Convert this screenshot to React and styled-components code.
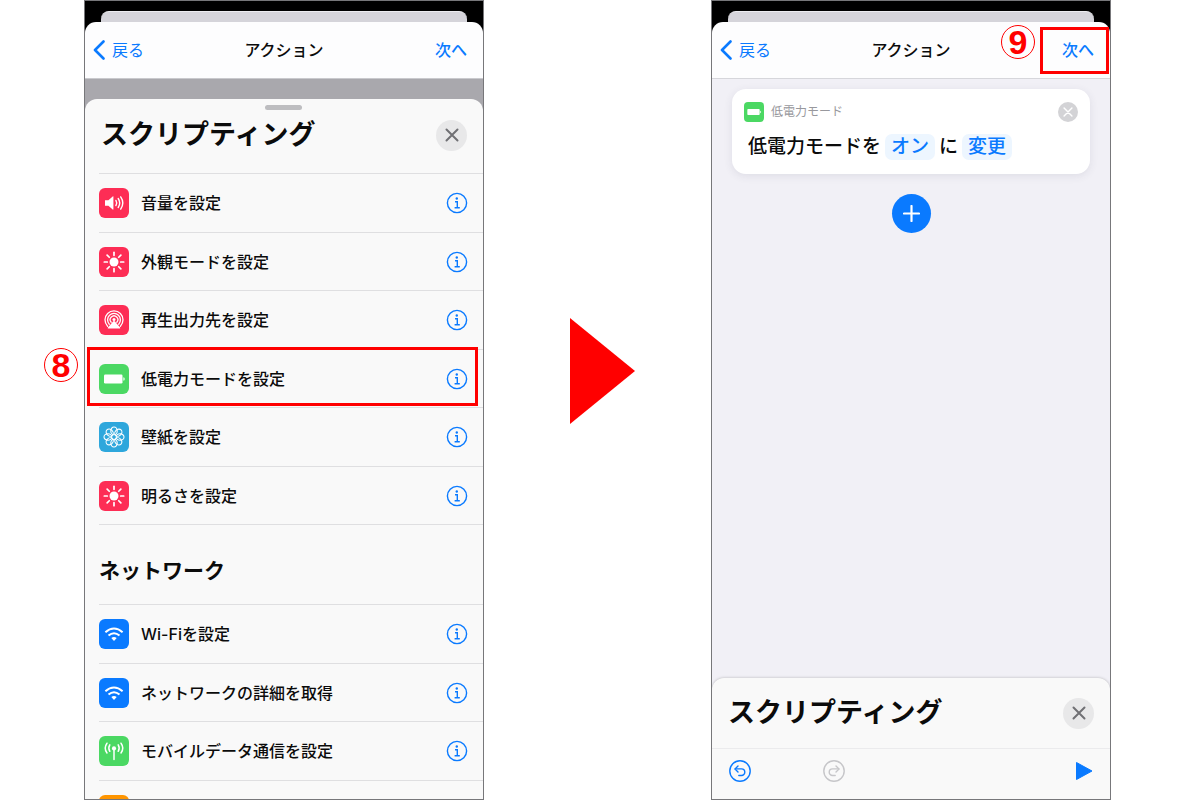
import React from "react";
import styled, { createGlobalStyle } from "styled-components";

const BLUE = "#0a7aff";
const RED = "#ff0000";

const GlobalStyle = createGlobalStyle`
  *, *::before, *::after { box-sizing: border-box; }
  body {
    margin: 0;
    background: #fff;
    color: #0b0b0b;
    font-family: Inter, "Noto Sans CJK JP", sans-serif;
    font-size: 16px;
    line-height: 24px;
  }
  h1, h2, h3, p, ul { margin: 0; padding: 0; }
  ul { list-style: none; }
  button {
    margin: 0;
    padding: 0;
    border: 0;
    background: none;
    color: inherit;
    font: inherit;
    cursor: pointer;
  }
  svg { display: block; flex: none; }
`;

const Page = styled.main`
  display: grid;
  grid-template-columns: 84fr 400fr 227fr 400fr 89fr;
  height: 100vh;
  overflow: hidden;
`;

const Slot = styled.section`
  position: relative;
  grid-column: ${(p) => p.$column};
  min-width: 0;
  height: 100vh;
`;

const Phone = styled.div`
  display: flex;
  flex-direction: column;
  height: 100%;
  overflow: hidden;
  border: 1px solid #77777a;
  background: ${(p) => p.$background};
`;

const Top = styled.div`
  flex: none;
  padding-top: 10px;
  background: #000;
`;

const Peek = styled.div`
  height: 11px;
  margin: 0 16px;
  border-top: 1px solid #ececf0;
  border-radius: 8px 8px 0 0;
  background: #d5d4da;
`;

const NavBar = styled.header`
  display: grid;
  grid-template-columns: 1fr auto 1fr;
  align-items: center;
  height: 57px;
  padding: 0 8px;
  border-bottom: 1px solid ${(p) => p.$line};
  border-radius: 11px 11px 0 0;
  background: #fdfdfe;
`;

const NavTitle = styled.h1`
  font-size: 16px;
  line-height: 24px;
  font-weight: 500;
`;

const BackButton = styled.button`
  display: flex;
  align-items: center;
  gap: 7px;
  justify-self: start;
  color: ${BLUE};
`;

const NextButton = styled.button`
  justify-self: end;
  padding: 0 8px;
  color: ${BLUE};
  font-weight: 500;
`;

const DimBand = styled.div`
  flex: none;
  height: 32px;
  margin-bottom: -12px;
  background: #a9a8ad;
`;

const Sheet = styled.div`
  position: relative;
  flex: none;
  border-radius: 12px 12px 0 0;
  background: #f9f9f9;
  box-shadow: ${(p) => (p.$raised ? "0 0 3px rgba(0, 0, 0, 0.25)" : "none")};
`;

const Grabber = styled.span`
  position: absolute;
  top: 6px;
  left: 50%;
  width: 37px;
  height: 5px;
  margin-left: -19px;
  border-radius: 3px;
  background: #bdbdc0;
`;

const SheetHeader = styled.div`
  display: flex;
  align-items: center;
  justify-content: space-between;
  height: ${(p) => p.$height}px;
  padding: 0 16px;
`;

const SheetTitle = styled.h2`
  font-size: 27px;
  line-height: 36px;
  font-weight: 700;
`;

const CloseButton = styled.button`
  display: grid;
  place-items: center;
  width: ${(p) => p.$size}px;
  height: ${(p) => p.$size}px;
  border-radius: 50%;
  background: ${(p) => p.$fill};
`;

const ActionList = styled.ul`
  display: grid;
  grid-auto-rows: 1fr;
  height: ${(p) => p.$height}px;
  margin-left: 14px;
  border-bottom: 1px solid #dfdfe1;
`;

const ActionRow = styled.li`
  display: flex;
  align-items: center;
  gap: 12px;
  min-width: 0;
  padding-top: 1px;
  padding-right: 15px;
  border-top: 1px solid #dfdfe1;
  font-weight: 500;
`;

const ActionName = styled.span`
  flex: 1;
  white-space: nowrap;
`;

const GroupTitle = styled.h3`
  height: 79px;
  padding: 30px 14px 0;
  font-size: 21px;
  line-height: 32px;
  font-weight: 700;
`;

const Workspace = styled.div`
  display: flex;
  flex: 1;
  flex-direction: column;
  align-items: center;
  gap: 20px;
  min-height: 0;
  padding: 10px 20px;
`;

const Card = styled.article`
  width: 100%;
  height: 85px;
  padding: 12px;
  border-radius: 14px;
  background: #fff;
  box-shadow: 0 2px 8px rgba(60, 60, 90, 0.1);
`;

const CardHeader = styled.div`
  display: flex;
  align-items: center;
  gap: 7px;
  height: 21px;
  color: #98989d;
  font-size: 12px;
  line-height: 20px;
`;

const CardLabel = styled.span`
  flex: 1;
`;

const Sentence = styled.p`
  display: flex;
  align-items: center;
  gap: 4px;
  padding: 12px 4px;
  font-size: 19px;
  line-height: 26px;
  font-weight: 500;
`;

const Token = styled.button`
  padding: 0 6px;
  border-radius: 7px;
  background: #edf6ff;
  color: ${BLUE};
`;

const AddButton = styled.button`
  display: grid;
  place-items: center;
  width: 39px;
  height: 39px;
  border-radius: 50%;
  background: ${BLUE};
`;

const Toolbar = styled.div`
  display: flex;
  align-items: flex-start;
  gap: 72px;
  height: 51px;
  padding: 11px 17px;
  border-top: 1px solid #ebebed;
`;

const PlayButton = styled.button`
  margin-left: auto;
`;

const Gutter = styled.div`
  display: flex;
  align-items: flex-start;
  justify-content: center;
  padding: 318px 0 0 10px;
`;

const StepNumber = styled.span`
  position: absolute;
  display: grid;
  place-items: center;
  width: 34px;
  height: 34px;
  border: 1px solid ${RED};
  border-radius: 50%;
  color: ${RED};
  font: 700 34px/32px "Liberation Sans", sans-serif;
`;

const StepEight = styled(StepNumber)`
  top: 348px;
  left: -40px;
`;

const StepNine = styled(StepNumber)`
  top: 25px;
  right: 76px;
`;

const Highlight = styled.span`
  position: absolute;
  border: 3px solid ${RED};
  pointer-events: none;
`;

const RowHighlight = styled(Highlight)`
  top: 347px;
  right: 6px;
  left: 3px;
  height: 59px;
`;

const NextHighlight = styled(Highlight)`
  top: 27px;
  right: 2px;
  width: 69px;
  height: 47px;
`;

const rays = [0, 45, 90, 135, 180, 225, 270, 315];

const glyphs = {
  volume: {
    color: "#fd2d55",
    art: (
      <>
        <path d="M6 12.3h3.4l4.3-3.8c.4-.3.7-.2.7.3v12.4c0 .5-.3.6-.7.3l-4.3-3.8H6z" fill="#fff" />
        <g fill="none" stroke="#fff" strokeWidth="1.4" strokeLinecap="round">
          <path d="M16.9 12.4q1.6 2.6 0 5.2" />
          <path d="M19.2 10.5q3 4.5 0 9" />
          <path d="M21.7 8.9q4.2 6.1 0 12.2" />
        </g>
      </>
    ),
  },
  sun: {
    color: "#fd2d55",
    art: (
      <>
        <circle cx="15" cy="15" r="4.5" fill="#fff" />
        <g stroke="#fff" strokeWidth="1.7" strokeLinecap="round">
          {rays.map((a) => (
            <path key={a} d="M15 5.3v3" transform={`rotate(${a} 15 15)`} />
          ))}
        </g>
      </>
    ),
  },
  airplay: {
    color: "#fd2d55",
    art: (
      <>
        <g fill="none" stroke="#fff" strokeWidth="1.3" strokeLinecap="round">
          <path d="M8.6 21.2a9 9 0 1 1 12.8 0" />
          <path d="M10.3 19.2a6.4 6.4 0 1 1 9.4 0" />
          <path d="M12.2 17.3a3.8 3.8 0 1 1 5.600 0" />
        </g>
        <circle cx="15" cy="14.6" r="1.5" fill="#fff" />
        <path d="M14.3 16.3q.7-.8 1.4 0l5.400 6.300q.5.9-.5 1H9.400q-1-.1-.5-1z" fill="#fff" />
      </>
    ),
  },
  battery: {
    color: "#4bd863",
    art: (
      <>
        <rect x="5" y="10.5" width="18.5" height="9" rx="1.2" fill="#fff" />
        <path d="M24.4 13.2q1.3.3 1.3 1.8t-1.3 1.8z" fill="#fff" />
      </>
    ),
  },
  flower: {
    color: "#2ea7dc",
    art: (
      <g fill="none" stroke="#fff" strokeWidth="1.1">
        {rays.map((a) => (
          <ellipse key={a} cx="15" cy="8.9" rx="3.2" ry="3.9" transform={`rotate(${a} 15 15)`} />
        ))}
      </g>
    ),
  },
  wifi: {
    color: "#0a7aff",
    art: (
      <>
        <g fill="none" stroke="#fff" strokeWidth="2">
          <path d="M6.4 13.2q8.6-7.4 17.2 0" />
          <path d="M9.5 16.5q5.5-4.6 11 0" />
        </g>
        <path d="M12.3 19q2.7-2 5.4 0L15 21.9z" fill="#fff" />
      </>
    ),
  },
  antenna: {
    color: "#4bd863",
    art: (
      <>
        <circle cx="15" cy="12.4" r="2.1" fill="#fff" />
        <g fill="none" stroke="#fff" strokeWidth="1.5" strokeLinecap="round">
          <path d="M15 13v10.5" />
          <path d="M10.8 8.9q-2 3.2 0 6.4M19.2 8.9q2 3.2 0 6.4" />
          <path d="M8 7.200q-3.600 4.900 0 9.800M22 7.200q3.600 4.900 0 9.800" />
        </g>
      </>
    ),
  },
  plain: { color: "#ff9500", art: null },
};

function AppIcon({ name, size = 30 }) {
  const glyph = glyphs[name];
  return (
    <svg width={size} height={size} viewBox="0 0 30 30" aria-hidden="true">
      <rect width="30" height="30" rx="6" fill={glyph.color} />
      {glyph.art}
    </svg>
  );
}

function InfoIcon() {
  return (
    <svg width="22" height="22" viewBox="0 0 22 22" fill="none" stroke={BLUE} aria-hidden="true">
      <circle cx="11" cy="11" r="9.6" strokeWidth="1.4" />
      <circle cx="10.8" cy="6.5" r="1.2" fill={BLUE} stroke="none" />
      <path d="M9 9.7h2.3v6M8.6 15.8h5.2" strokeWidth="1.4" />
    </svg>
  );
}

function CrossIcon({ size, color, width }) {
  return (
    <svg width={size} height={size} viewBox="0 0 14 14" aria-hidden="true">
      <path d="M1.5 1.5l11 11M12.5 1.5l-11 11" stroke={color} strokeWidth={width} strokeLinecap="round" />
    </svg>
  );
}

function HistoryIcon({ color, redo }) {
  return (
    <svg width="22" height="22" viewBox="0 0 22 22" fill="none" stroke={color} aria-hidden="true">
      <circle cx="11" cy="11" r="10.2" strokeWidth="1.4" />
      <g
        transform={redo ? "translate(22 0) scale(-1 1)" : undefined}
        strokeWidth="1.4"
        strokeLinecap="round"
        strokeLinejoin="round"
      >
        <path d="M9 5.9L6 8.9l3 3" />
        <path d="M6.200 8.900h6.300a3.300 3.300 0 0 1 0 6.600h-2.700" />
      </g>
    </svg>
  );
}

function Nav({ line }) {
  return (
    <Top>
      <Peek />
      <NavBar $line={line}>
        <BackButton>
          <svg width="12" height="20" viewBox="0 0 12 20" fill="none" aria-hidden="true">
            <path d="M10.5 1.5L2 10l8.5 8.5" stroke={BLUE} strokeWidth="2.6" strokeLinecap="round" strokeLinejoin="round" />
          </svg>
          戻る
        </BackButton>
        <NavTitle>アクション</NavTitle>
        <NextButton>次へ</NextButton>
      </NavBar>
    </Top>
  );
}

const HeaderSpace = styled.div`
  padding: 3px 0 5px;
`;

function SheetTop({ height }) {
  return (
    <SheetHeader $height={height}>
      <SheetTitle>スクリプティング</SheetTitle>
      <CloseButton $size={31} $fill="#e8e8e9" aria-label="閉じる">
        <CrossIcon size={14} color="#707074" width={2} />
      </CloseButton>
    </SheetHeader>
  );
}

function Actions({ items, height }) {
  return (
    <ActionList $height={height}>
      {items.map(([icon, name]) => (
        <ActionRow key={icon + name}>
          <AppIcon name={icon} />
          <ActionName>{name}</ActionName>
          <button aria-label="情報">
            <InfoIcon />
          </button>
        </ActionRow>
      ))}
    </ActionList>
  );
}

const scriptingActions = [
  ["volume", "音量を設定"],
  ["sun", "外観モードを設定"],
  ["airplay", "再生出力先を設定"],
  ["battery", "低電力モードを設定"],
  ["flower", "壁紙を設定"],
  ["sun", "明るさを設定"],
];

const networkActions = [
  ["wifi", "Wi-Fiを設定"],
  ["wifi", "ネットワークの詳細を取得"],
  ["antenna", "モバイルデータ通信を設定"],
  ["plain", ""],
];

export default function App() {
  return (
    <>
      <GlobalStyle />
      <Page>
        <Slot $column={2}>
          <Phone $background="#f9f9f9">
            <Nav line="#c9c9cd" />
            <DimBand />
            <Sheet>
              <Grabber />
              <HeaderSpace>
                <SheetTop height={66} />
              </HeaderSpace>
              <Actions items={scriptingActions} height={352} />
              <GroupTitle>ネットワーク</GroupTitle>
              <Actions items={networkActions} height={235} />
            </Sheet>
          </Phone>
          <RowHighlight />
          <StepEight>8</StepEight>
        </Slot>
        <Gutter>
          <svg width="65" height="106" viewBox="0 0 65 106" aria-hidden="true">
            <path d="M0 0L65 53L0 106z" fill={RED} />
          </svg>
        </Gutter>
        <Slot $column={4}>
          <Phone $background="#f1f0f6">
            <Nav line="#d6d6db" />
            <Workspace>
              <Card>
                <CardHeader>
                  <AppIcon name="battery" size={20} />
                  <CardLabel>低電力モード</CardLabel>
                  <CloseButton $size={20} $fill="#d3d3d6" aria-label="削除">
                    <CrossIcon size={10} color="#fff" width={2} />
                  </CloseButton>
                </CardHeader>
                <Sentence>
                  低電力モードを
                  <Token>オン</Token>
                  に
                  <Token>変更</Token>
                </Sentence>
              </Card>
              <AddButton aria-label="追加">
                <svg width="17" height="17" viewBox="0 0 17 17" aria-hidden="true">
                  <path d="M8.5 1v15M1 8.5h15" stroke="#fff" strokeWidth="2.200" strokeLinecap="round" />
                </svg>
              </AddButton>
            </Workspace>
            <Sheet $raised>
              <SheetTop height={70} />
              <Toolbar>
                <button aria-label="取り消す">
                  <HistoryIcon color={BLUE} />
                </button>
                <button aria-label="やり直す">
                  <HistoryIcon color="#c6c6c9" redo />
                </button>
                <PlayButton aria-label="実行">
                  <svg width="18" height="22" viewBox="0 0 18 22" aria-hidden="true">
                    <path d="M1.5 2.5L17 11L1.5 19.5z" fill={BLUE} stroke={BLUE} strokeLinejoin="round" />
                  </svg>
                </PlayButton>
              </Toolbar>
            </Sheet>
          </Phone>
          <NextHighlight />
          <StepNine>9</StepNine>
        </Slot>
      </Page>
    </>
  );
}
